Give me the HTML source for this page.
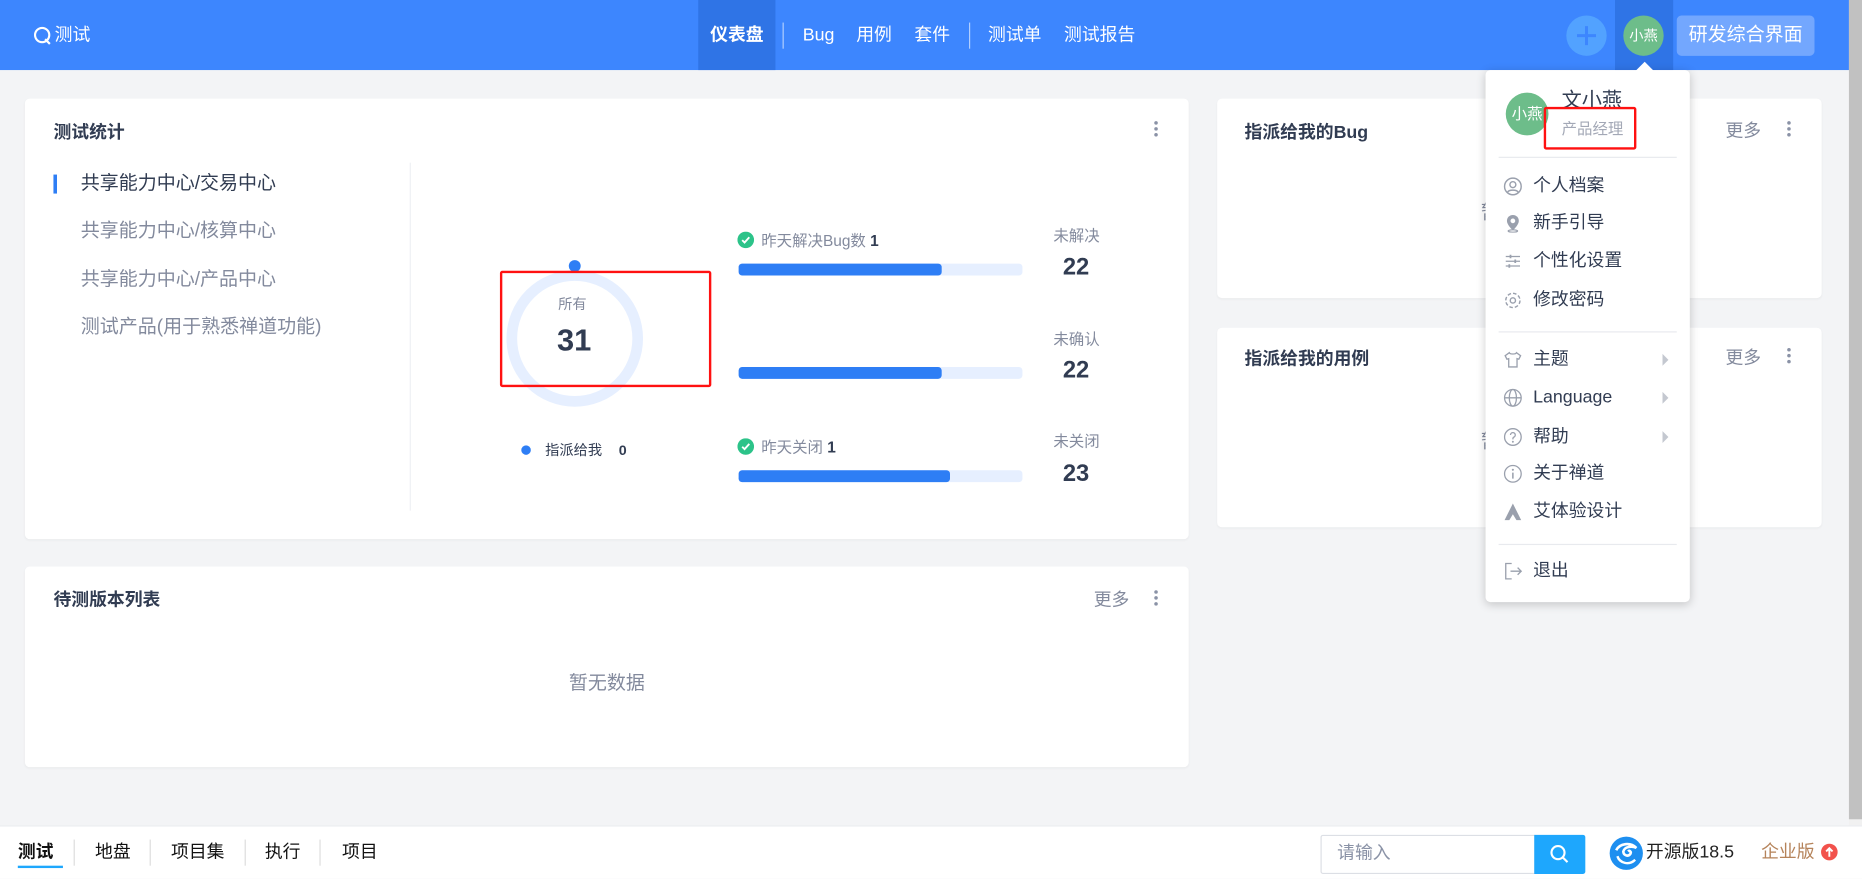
<!DOCTYPE html>
<html><head><meta charset="utf-8"><style>
*{box-sizing:border-box;margin:0;padding:0}
html,body{width:1862px;height:879px;overflow:hidden;background:#f3f4f6}
#w{position:absolute;left:0;top:0;width:1568px;height:740px;transform:scale(1.1875);transform-origin:0 0;font-family:"Liberation Sans","Noto Sans CJK SC",sans-serif;color:#313c52}
.a{position:absolute;white-space:nowrap}
.card{position:absolute;background:#fff;border-radius:4px;box-shadow:0 1px 2px rgba(0,0,0,.04)}
.t{font-size:15px;font-weight:bold;color:#313c52}
.k{position:absolute;width:3px}
.k i{display:block;width:3px;height:3px;border-radius:50%;background:#8a92a6;margin-bottom:2px}
.g{color:#838a9d}
.bar{position:absolute;left:622px;width:239px;height:10px;border-radius:3px;background:#e6efff}
.bar b{display:block;height:10px;border-radius:3px;background:#2e7ef5}
.mi{position:absolute;left:1291px;font-size:15px;color:#313c52;line-height:20px}
.ic{position:absolute;left:1266px}
.arr{position:absolute;left:1400px;width:0;height:0;border-left:5px solid #c4c8d0;border-top:5px solid transparent;border-bottom:5px solid transparent}
</style></head><body><div id="w">
<div class="a" style="left:0;top:0;width:1557px;height:59px;background:#3d86fe"></div>
<svg class="a" style="left:28px;top:22px" width="16" height="17" viewBox="0 0 16 17"><circle cx="7.5" cy="7.5" r="6" fill="none" stroke="#fff" stroke-width="1.8"/><path d="M10 11l4 4" stroke="#fff" stroke-width="1.8"/></svg>
<div class="a" style="left:46px;top:20px;font-size:15px;color:#fff;line-height:20px">测试</div>
<div class="a" style="left:588px;top:0;width:65px;height:59px;background:#2f74e6"></div>
<div class="a" style="left:598px;top:20px;font-size:15px;color:#fff;font-weight:bold;line-height:20px">仪表盘</div>
<div class="a" style="left:659px;top:19px;width:1px;height:22px;background:rgba(255,255,255,.6)"></div>
<div class="a" style="left:676px;top:20px;font-size:15px;color:#fff;line-height:20px">Bug</div>
<div class="a" style="left:721px;top:20px;font-size:15px;color:#fff;line-height:20px">用例</div>
<div class="a" style="left:770px;top:20px;font-size:15px;color:#fff;line-height:20px">套件</div>
<div class="a" style="left:816px;top:19px;width:1px;height:22px;background:rgba(255,255,255,.6)"></div>
<div class="a" style="left:832px;top:20px;font-size:15px;color:#fff;line-height:20px">测试单</div>
<div class="a" style="left:896px;top:20px;font-size:15px;color:#fff;line-height:20px">测试报告</div>
<div class="a" style="left:1319px;top:13px;width:34px;height:34px;border-radius:50%;background:#52a2ff"></div>
<svg class="a" style="left:1326px;top:20px" width="20" height="20"><path d="M10 2v16M2 10h16" stroke="#3d86fe" stroke-width="2.5"/></svg>
<div class="a" style="left:1360px;top:0;width:49px;height:59px;background:#2f74e6"></div>
<div class="a" style="left:1367px;top:13px;width:34px;height:34px;border-radius:50%;background:#6dbd8a;color:#fff;font-size:12px;line-height:34px;text-align:center">小燕</div>
<div class="a" style="left:1412px;top:13px;width:116px;height:34px;border-radius:4px;background:rgba(255,255,255,.28);color:#fff;font-size:16px;line-height:34px;text-align:center">研发综合界面</div>
<div class="a" style="left:1557px;top:0;width:11px;height:690px;background:#c1c1c1"></div>
<div class="a" style="left:1557px;top:690px;width:11px;height:50px;background:#f1f1f1"></div>
<div class="card" style="left:21px;top:83px;width:980px;height:371px"></div>
<div class="a t" style="left:45px;top:100px">测试统计</div>
<div class="k" style="left:972px;top:102px"><i></i><i></i><i></i></div>
<div class="a" style="left:45px;top:147px;width:3px;height:16px;background:#2e7ef5"></div>
<div class="a" style="left:68px;top:144px;font-size:16px;line-height:21px">共享能力中心/交易中心</div>
<div class="a g" style="left:68px;top:184px;font-size:16px;line-height:21px">共享能力中心/核算中心</div>
<div class="a g" style="left:68px;top:225px;font-size:16px;line-height:21px">共享能力中心/产品中心</div>
<div class="a g" style="left:68px;top:265px;font-size:16px;line-height:21px">测试产品(用于熟悉禅道功能)</div>
<div class="a" style="left:345px;top:137px;width:1px;height:293px;background:#eef0f4"></div>
<svg class="a" style="left:420px;top:216px" width="130" height="140"><circle cx="64" cy="69" r="53" fill="none" stroke="#e6efff" stroke-width="9"/><circle cx="64" cy="8" r="5" fill="#2e7ef5"/></svg>
<div class="a g" style="left:470px;top:248px;font-size:12px;line-height:16px">所有</div>
<div class="a" style="left:469px;top:270px;font-size:26px;font-weight:bold;line-height:32px">31</div>
<div class="a" style="left:421px;top:228px;width:178px;height:98px;border:2px solid #f11;border-radius:2px"></div>
<div class="a" style="left:439px;top:375px;width:8px;height:8px;border-radius:50%;background:#2e7ef5"></div>
<div class="a" style="left:459px;top:371px;font-size:12px;line-height:16px">指派给我</div>
<div class="a" style="left:521px;top:371px;font-size:12px;font-weight:bold;line-height:16px">0</div>
<svg class="a" style="left:621px;top:195px" width="14" height="14"><circle cx="7" cy="7" r="7" fill="#2cc389"/><path d="M4 7.2l2 2 4-4.4" stroke="#fff" stroke-width="1.6" fill="none"/></svg>
<div class="a g" style="left:641px;top:194px;font-size:13px;line-height:17px">昨天解决Bug数 <b style="color:#313c52">1</b></div>
<div class="bar" style="top:222px"><b style="width:171px"></b></div>
<div class="bar" style="top:309px"><b style="width:171px"></b></div>
<svg class="a" style="left:621px;top:369px" width="14" height="14"><circle cx="7" cy="7" r="7" fill="#2cc389"/><path d="M4 7.2l2 2 4-4.4" stroke="#fff" stroke-width="1.6" fill="none"/></svg>
<div class="a g" style="left:641px;top:368px;font-size:13px;line-height:17px">昨天关闭 <b style="color:#313c52">1</b></div>
<div class="bar" style="top:396px"><b style="width:178px"></b></div>
<div class="a g" style="left:887px;top:190px;font-size:13px;line-height:17px">未解决</div>
<div class="a" style="left:895px;top:212px;font-size:20px;font-weight:bold;line-height:26px">22</div>
<div class="a g" style="left:887px;top:277px;font-size:13px;line-height:17px">未确认</div>
<div class="a" style="left:895px;top:299px;font-size:20px;font-weight:bold;line-height:26px">22</div>
<div class="a g" style="left:887px;top:363px;font-size:13px;line-height:17px">未关闭</div>
<div class="a" style="left:895px;top:386px;font-size:20px;font-weight:bold;line-height:26px">23</div>
<div class="card" style="left:21px;top:477px;width:980px;height:169px"></div>
<div class="a t" style="left:45px;top:494px">待测版本列表</div>
<div class="a g" style="left:921px;top:494px;font-size:15px">更多</div>
<div class="k" style="left:972px;top:497px"><i></i><i></i><i></i></div>
<div class="a g" style="left:479px;top:566px;font-size:16px;line-height:20px">暂无数据</div>
<div class="card" style="left:1025px;top:83px;width:509px;height:168px"></div>
<div class="a t" style="left:1048px;top:100px">指派给我的Bug</div>
<div class="a g" style="left:1453px;top:99px;font-size:15px">更多</div>
<div class="k" style="left:1505px;top:102px"><i></i><i></i><i></i></div>
<div class="a g" style="left:1247px;top:170px;font-size:16px;line-height:20px">暂无数据</div>
<div class="card" style="left:1025px;top:276px;width:509px;height:168px"></div>
<div class="a t" style="left:1048px;top:291px">指派给我的用例</div>
<div class="a g" style="left:1453px;top:290px;font-size:15px">更多</div>
<div class="k" style="left:1505px;top:293px"><i></i><i></i><i></i></div>
<div class="a g" style="left:1247px;top:363px;font-size:16px;line-height:20px">暂无数据</div>
<div class="a" style="left:1251px;top:59px;width:172px;height:448px;background:#fff;border-radius:4px;box-shadow:0 2px 8px rgba(0,0,0,.2)"></div>
<div class="a" style="left:1377px;top:52px;width:0;height:0;border-left:8px solid transparent;border-right:8px solid transparent;border-bottom:8px solid #fff"></div>
<div class="a" style="left:1268px;top:78px;width:36px;height:36px;border-radius:50%;background:#6dbd8a;color:#fff;font-size:13px;line-height:36px;text-align:center">小燕</div>
<div class="a" style="left:1315px;top:74px;font-size:17px;line-height:22px">文小燕</div>
<div class="a" style="left:1315px;top:100px;font-size:13px;line-height:17px;color:#a3a8b6">产品经理</div>
<div class="a" style="left:1300px;top:90px;width:78px;height:36px;border:2px solid #f11;border-radius:2px"></div>
<div class="a" style="left:1262px;top:132px;width:150px;height:1px;background:#e8eaee"></div>
<svg class="ic" style="top:149px" width="16" height="16"><circle cx="8" cy="8" r="7" fill="none" stroke="#9aa0ad" stroke-width="1.2"/><circle cx="8" cy="6.5" r="2.5" fill="none" stroke="#9aa0ad" stroke-width="1.2"/><path d="M3.5 13c1-2.5 8-2.5 9 0" fill="none" stroke="#9aa0ad" stroke-width="1.2"/></svg>
<div class="mi" style="top:147px">个人档案</div>
<svg class="ic" style="top:180px" width="16" height="16"><path d="M8 1a5 5 0 0 0-5 5c0 3.5 5 8 5 8s5-4.5 5-8a5 5 0 0 0-5-5z" fill="#9aa0ad"/><circle cx="8" cy="6" r="2" fill="#fff"/><ellipse cx="8" cy="14.5" rx="4" ry="1" fill="none" stroke="#9aa0ad"/></svg>
<div class="mi" style="top:178px">新手引导</div>
<svg class="ic" style="top:212px" width="16" height="16"><path d="M2 4h12M2 8h12M2 12h12" stroke="#9aa0ad" stroke-width="1"/><path d="M6 2.5v3M10 6.5v3M5 10.5v3" stroke="#9aa0ad" stroke-width="1.5"/></svg>
<div class="mi" style="top:210px">个性化设置</div>
<svg class="ic" style="top:245px" width="16" height="16"><circle cx="8" cy="8" r="6" fill="none" stroke="#9aa0ad" stroke-width="1.2" stroke-dasharray="3 1.7"/><circle cx="8" cy="8" r="2.2" fill="none" stroke="#9aa0ad" stroke-width="1.2"/></svg>
<div class="mi" style="top:243px">修改密码</div>
<div class="a" style="left:1262px;top:279px;width:150px;height:1px;background:#e8eaee"></div>
<svg class="ic" style="top:295px" width="16" height="16"><path d="M5 2L1.5 4.5 3 7.5 4.5 7v7h7V7l1.5.5 1.5-3L11 2c-.5 1.5-5.5 1.5-6 0z" fill="none" stroke="#9aa0ad" stroke-width="1.1"/></svg>
<div class="mi" style="top:293px">主题</div><div class="arr" style="top:298px"></div>
<svg class="ic" style="top:327px" width="16" height="16"><circle cx="8" cy="8" r="7" fill="none" stroke="#9aa0ad" stroke-width="1.1"/><ellipse cx="8" cy="8" rx="3" ry="7" fill="none" stroke="#9aa0ad" stroke-width="1.1"/><path d="M1 8h14" stroke="#9aa0ad" stroke-width="1.1"/></svg>
<div class="mi" style="top:325px">Language</div><div class="arr" style="top:330px"></div>
<svg class="ic" style="top:360px" width="16" height="16"><circle cx="8" cy="8" r="7" fill="none" stroke="#9aa0ad" stroke-width="1.1"/><path d="M6 6.3a2 2 0 1 1 2.6 1.9C8 8.5 8 9 8 10" fill="none" stroke="#9aa0ad" stroke-width="1.1"/><circle cx="8" cy="12" r=".8" fill="#9aa0ad"/></svg>
<div class="mi" style="top:358px">帮助</div><div class="arr" style="top:363px"></div>
<svg class="ic" style="top:391px" width="16" height="16"><circle cx="8" cy="8" r="7" fill="none" stroke="#9aa0ad" stroke-width="1.1"/><path d="M8 7v5" stroke="#9aa0ad" stroke-width="1.3"/><circle cx="8" cy="4.6" r=".9" fill="#9aa0ad"/></svg>
<div class="mi" style="top:389px">关于禅道</div>
<svg class="ic" style="top:423px" width="16" height="16"><path d="M8 1L1 15h4l3-5 3 5h4z" fill="#9aa0ad"/></svg>
<div class="mi" style="top:421px">艾体验设计</div>
<div class="a" style="left:1262px;top:458px;width:150px;height:1px;background:#e8eaee"></div>
<svg class="ic" style="top:473px" width="16" height="16"><path d="M7 1.5H2v13h5" fill="none" stroke="#9aa0ad" stroke-width="1.1"/><path d="M6 8h9M12 5l3 3-3 3" fill="none" stroke="#9aa0ad" stroke-width="1.1"/></svg>
<div class="mi" style="top:471px">退出</div>
<div class="a" style="left:0;top:695px;width:1568px;height:45px;background:#fff;border-top:1px solid #e9ebef"></div>
<div class="a" style="left:15px;top:708px;font-size:15px;font-weight:bold;line-height:20px;color:#111">测试</div>
<div class="a" style="left:15px;top:729px;width:38px;height:2px;background:#1ea7fd"></div>
<div class="a" style="left:62px;top:707px;width:1px;height:22px;background:#ddd"></div>
<div class="a" style="left:80px;top:708px;font-size:15px;line-height:20px;color:#111">地盘</div>
<div class="a" style="left:126px;top:707px;width:1px;height:22px;background:#ddd"></div>
<div class="a" style="left:144px;top:708px;font-size:15px;line-height:20px;color:#111">项目集</div>
<div class="a" style="left:206px;top:707px;width:1px;height:22px;background:#ddd"></div>
<div class="a" style="left:223px;top:708px;font-size:15px;line-height:20px;color:#111">执行</div>
<div class="a" style="left:269px;top:707px;width:1px;height:22px;background:#ddd"></div>
<div class="a" style="left:288px;top:708px;font-size:15px;line-height:20px;color:#111">项目</div>
<div class="a" style="left:1112px;top:703px;width:181px;height:33px;border:1px solid #dcdfe5;border-radius:2px 0 0 2px"></div>
<div class="a" style="left:1126px;top:709px;font-size:15px;line-height:20px;color:#8a92a6">请输入</div>
<div class="a" style="left:1292px;top:703px;width:43px;height:33px;background:#1ea7fd;border-radius:0 2px 2px 0"></div>
<svg class="a" style="left:1305px;top:711px" width="17" height="17"><circle cx="7" cy="7" r="5.5" fill="none" stroke="#fff" stroke-width="1.8"/><path d="M11 11l4 4" stroke="#fff" stroke-width="1.8"/></svg>
<svg class="a" style="left:1355px;top:704px" width="29" height="29"><circle cx="14.5" cy="14.5" r="14" fill="#1e8ff0"/><path d="M6 12c3-6 12-7 17-2-4-2-10-1-11 3 0 3 4 5 6 2 1-2-1-3-2-2" fill="none" stroke="#fff" stroke-width="2.2"/><path d="M7 17c2 6 10 8 15 3" fill="none" stroke="#fff" stroke-width="2"/></svg>
<div class="a" style="left:1386px;top:708px;font-size:15px;line-height:20px;color:#222">开源版18.5</div>
<div class="a" style="left:1483px;top:708px;font-size:15px;line-height:20px;color:#b5835a">企业版</div>
<svg class="a" style="left:1533px;top:710px" width="15" height="15"><circle cx="7.5" cy="7.5" r="7" fill="#f2524c"/><path d="M7.5 11.5V4.5M4.8 7l2.7-2.7L10.2 7" fill="none" stroke="#fff" stroke-width="1.6"/></svg>
</div></body></html>
